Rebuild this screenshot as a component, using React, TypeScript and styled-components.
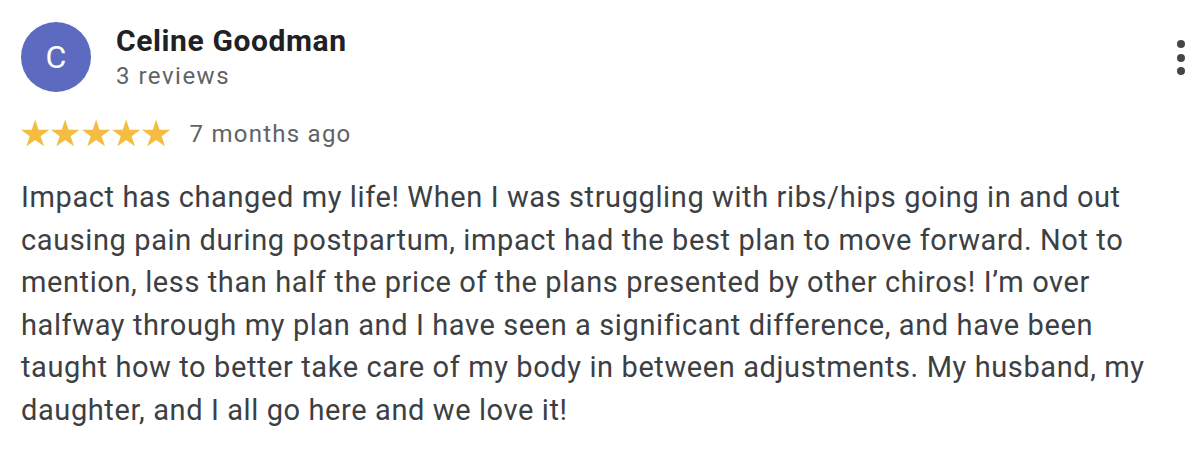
import React from "react";
import styled, { createGlobalStyle } from "styled-components";

const Global = createGlobalStyle`
  html, body { margin: 0; padding: 0; background: #ffffff; }
  body { font-family: Roboto, "Noto Sans", Arial, sans-serif; }
`;

const Card = styled.div`
  position: relative;
  width: 1200px;
  height: 449px;
  box-sizing: border-box;
  padding: 22px 0 0 21px;
  background: #ffffff;
  overflow: hidden;
`;

const Header = styled.div`
  display: flex;
  align-items: flex-start;
  gap: 25px;
`;

const Avatar = styled.div`
  width: 70px;
  height: 70px;
  border-radius: 50%;
  background: #5c6bc0;
  color: #ffffff;
  display: flex;
  align-items: center;
  justify-content: center;
  font-size: 32px;
  font-weight: 400;
  flex-shrink: 0;
`;

const Who = styled.div`
  display: flex;
  flex-direction: column;
`;

const Name = styled.div`
  font-size: 30px;
  line-height: 38px;
  font-weight: 700;
  letter-spacing: 0.6px;
  color: #202124;
`;

const Sub = styled.div`
  margin-top: 1px;
  font-size: 24px;
  line-height: 30px;
  letter-spacing: 1.5px;
  color: #5f6368;
`;

const MoreButton = styled.div`
  position: absolute;
  top: 40px;
  right: 15px;
  width: 8px;
  display: flex;
  flex-direction: column;
  gap: 5.5px;
`;

const Dot = styled.span`
  width: 8px;
  height: 8px;
  border-radius: 50%;
  background: #444746;
`;

const RatingRow = styled.div`
  display: flex;
  align-items: flex-start;
  margin-top: 27px;
  gap: 18px;
`;

const Stars = styled.div`
  display: flex;
  margin-left: -1px;
`;

const When = styled.div`
  font-size: 24px;
  line-height: 30px;
  letter-spacing: 1.25px;
  color: #5f6368;
`;

const Body = styled.p`
  margin: 27px 0 0 0;
  width: 1165px;
  font-size: 29px;
  line-height: 42.6px;
  letter-spacing: 0.6px;
  color: #3c4043;
`;

const Star = () => (
  <svg width="30.3" height="27" viewBox="0 0 30.3 27">
    <path
      fill="#f4bc41"
      d="M15.15 0.5 L18.56 10.81 L29.35 10.81 L20.62 17.19 L23.99 27.23 L15.15 21.07 L6.31 27.23 L9.68 17.19 L0.95 10.81 L11.74 10.81 Z"
    />
  </svg>
);

export default function App() {
  return (
    <>
      <Global />
      <Card>
        <Header>
          <Avatar>C</Avatar>
          <Who>
            <Name>Celine Goodman</Name>
            <Sub>3 reviews</Sub>
          </Who>
        </Header>
        <MoreButton>
          <Dot />
          <Dot />
          <Dot />
        </MoreButton>
        <RatingRow>
          <Stars>
            {[0, 1, 2, 3, 4].map((i) => (
              <Star key={i} />
            ))}
          </Stars>
          <When>7 months ago</When>
        </RatingRow>
        <Body>
          Impact has changed my life! When I was struggling with ribs/hips going in and out
          causing pain during postpartum, impact had the best plan to move forward. Not to
          mention, less than half the price of the plans presented by other chiros! I’m over
          halfway through my plan and I have seen a significant difference, and have been
          taught how to better take care of my body in between adjustments. My husband, my
          daughter, and I all go here and we love it!
        </Body>
      </Card>
    </>
  );
}
